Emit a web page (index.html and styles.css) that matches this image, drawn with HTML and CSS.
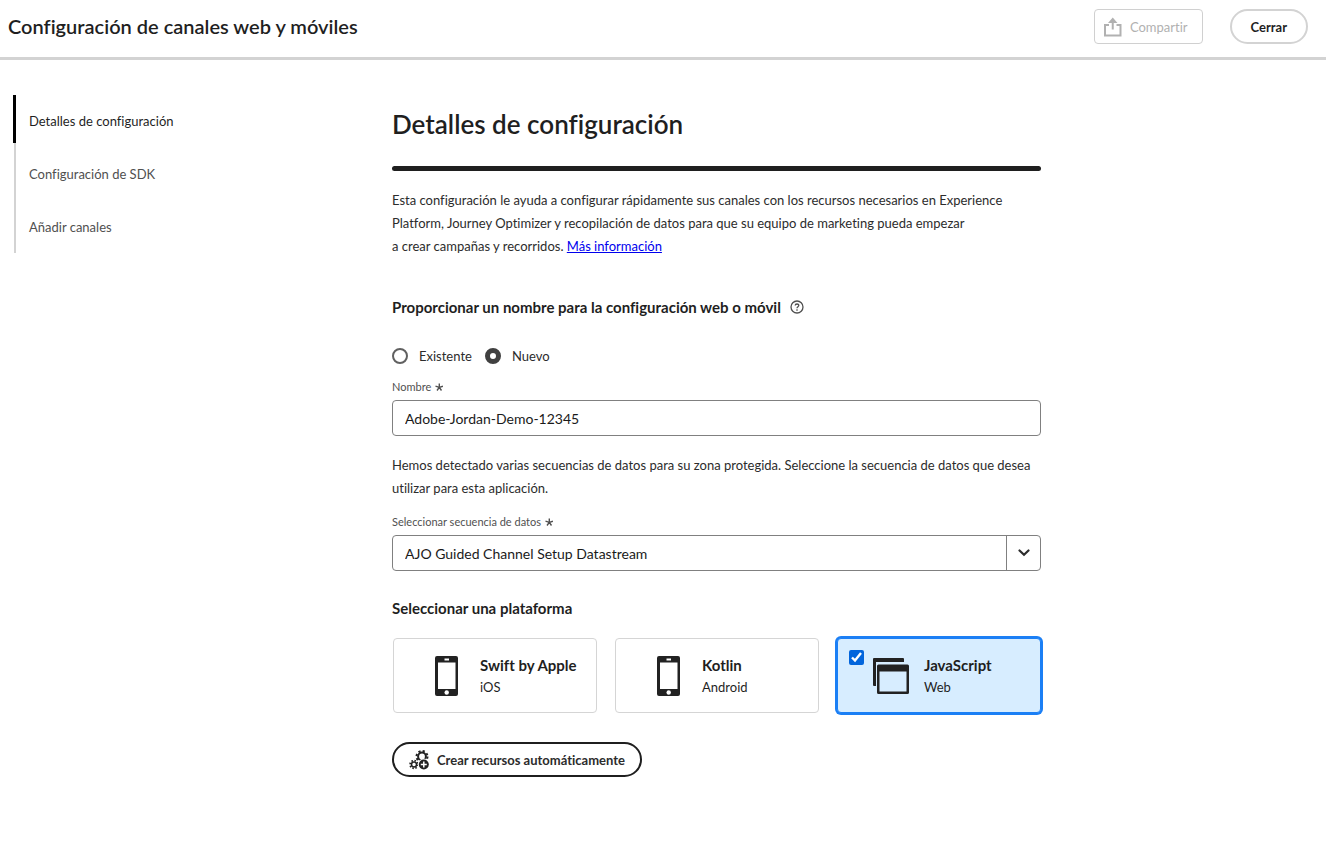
FILE: index.html
```html
<!DOCTYPE html>
<html lang="es">
<head>
<meta charset="utf-8">
<meta name="viewport" content="width=device-width, initial-scale=1">
<title>Configuración de canales web y móviles</title>
<link rel="stylesheet" href="styles.css">
</head>
<body>
<header class="topbar">
  <h1 class="topbar-title">Configuración de canales web y móviles</h1>
  <div class="topbar-actions">
    <button class="share" type="button" disabled>
      <svg width="20" height="20" viewBox="0 0 20 20" aria-hidden="true"><path d="M6 8H2v10.500h15.500V8h-4" fill="none" stroke="currentColor" stroke-width="2"/><path d="M9.750 0.500L14.500 6h-3.750v6.500h-2V6H5z" fill="currentColor"/></svg>
      <span>Compartir</span>
    </button>
    <button class="close" type="button">Cerrar</button>
  </div>
</header>
<div class="layout">
  <nav class="steps" aria-label="Pasos">
    <a class="step step-active" href="#detalles" aria-current="step">Detalles de configuración</a>
    <a class="step" href="#sdk">Configuración de SDK</a>
    <a class="step" href="#canales">Añadir canales</a>
  </nav>
  <main class="content" id="detalles">
    <h2 class="page-title">Detalles de configuración</h2>
    <div class="rule"></div>
    <p class="text">Esta configuración le ayuda a configurar rápidamente sus canales con los recursos necesarios en Experience<br>Platform, Journey Optimizer y recopilación de datos para que su equipo de marketing pueda empezar<br>a crear campañas y recorridos. <a class="link" href="#info">Más información</a></p>
    <h3 class="section-title name-title">Proporcionar un nombre para la configuración web o móvil
      <svg width="14" height="14" viewBox="0 0 14 14" fill="none" stroke="#505050" aria-hidden="true"><circle cx="7" cy="7" r="6" stroke-width="1.300"/><path d="M5.200 5.600C5.200 3.400 8.900 3.500 8.800 5.500C8.700 6.800 7 6.600 7 8.300" stroke-width="1.300"/><circle cx="7" cy="10" r=".5" fill="#505050" stroke-width=".6"/></svg>
    </h3>
    <div class="radios" role="radiogroup" aria-label="Tipo de configuración">
      <label class="radio"><input type="radio" name="kind"><span>Existente</span></label>
      <label class="radio"><input type="radio" name="kind" checked><span>Nuevo</span></label>
    </div>
    <label class="field-label" for="name">Nombre
      <svg width="8" height="8" viewBox="0 0 8 8" aria-hidden="true"><path d="M4.300 4.300V.4M4.300 4.300L.5 3.200M4.300 4.300L7.900 3.200M4.300 4.300L2 7.500M4.300 4.300L6.500 7.500" stroke="currentColor" stroke-width="1.400"/></svg>
    </label>
    <input class="control" id="name" type="text" value="Adobe-Jordan-Demo-12345">
    <p class="text stream-text">Hemos detectado varias secuencias de datos para su zona protegida. Seleccione la secuencia de datos que desea<br>utilizar para esta aplicación.</p>
    <label class="field-label" for="stream">Seleccionar secuencia de datos
      <svg width="8" height="8" viewBox="0 0 8 8" aria-hidden="true"><path d="M4.300 4.300V.4M4.300 4.300L.5 3.200M4.300 4.300L7.900 3.200M4.300 4.300L2 7.500M4.300 4.300L6.500 7.500" stroke="currentColor" stroke-width="1.400"/></svg>
    </label>
    <div class="picker">
      <select class="control" id="stream"><option>AJO Guided Channel Setup Datastream</option></select>
      <span class="picker-arrow"><svg width="12" height="8" viewBox="0 0 12 8" aria-hidden="true"><path d="M1.500 1.500L6 5.800L10.500 1.500" fill="none" stroke="#2c2c2c" stroke-width="2.200" stroke-linecap="round"/></svg></span>
    </div>
    <h3 class="section-title">Seleccionar una plataforma</h3>
    <div class="cards">
      <label class="card">
        <input class="card-check" type="checkbox">
        <svg class="card-icon" width="38" height="40" viewBox="0 0 38 40" aria-hidden="true"><path fill="#222" fill-rule="evenodd" d="M9 0h19a2 2 0 0 1 2 2v36a2 2 0 0 1-2 2H9a2 2 0 0 1-2-2V2a2 2 0 0 1 2-2zM10 6.500v26.500h17.500V6.500zM16.500 2.500v2h4.500v-2z"/><circle cx="18.700" cy="36.500" r="2.200" fill="#fff"/></svg>
        <span class="card-text"><strong>Swift by Apple</strong><span>iOS</span></span>
      </label>
      <label class="card">
        <input class="card-check" type="checkbox">
        <svg class="card-icon" width="38" height="40" viewBox="0 0 38 40" aria-hidden="true"><path fill="#222" fill-rule="evenodd" d="M9 0h19a2 2 0 0 1 2 2v36a2 2 0 0 1-2 2H9a2 2 0 0 1-2-2V2a2 2 0 0 1 2-2zM10 6.500v26.500h17.500V6.500zM16.500 2.500v2h4.500v-2z"/><circle cx="18.700" cy="36.500" r="2.200" fill="#fff"/></svg>
        <span class="card-text"><strong>Kotlin</strong><span>Android</span></span>
      </label>
      <label class="card card-selected">
        <input class="card-check" type="checkbox" checked>
        <svg class="card-icon" width="38" height="40" viewBox="0 0 38 40" aria-hidden="true"><path fill="#222" d="M2 2h29a1 1 0 0 1 1 1v3H4v24H2a1 1 0 0 1-1-1V3a1 1 0 0 1 1-1z"/><path fill="#222" fill-rule="evenodd" d="M6.500 8.500h29a1.500 1.500 0 0 1 1.500 1.500v26.500a1.500 1.500 0 0 1-1.500 1.500h-29A1.500 1.500 0 0 1 5 36.500V10a1.500 1.500 0 0 1 1.500-1.500zM7.500 15.500V35.500h27V15.500z"/></svg>
        <span class="card-text"><strong>JavaScript</strong><span>Web</span></span>
      </label>
    </div>
    <button class="create" type="button">
      <svg width="20" height="20" viewBox="0 0 20 20" fill="none" stroke="#222" aria-hidden="true"><circle cx="13" cy="6.500" r="3.900" stroke-width="2"/><circle cx="13" cy="6.500" r="5.500" stroke-width="2" stroke-dasharray="2.160 2.160"/><circle cx="5" cy="14.500" r="2.500" stroke-width="1.500"/><circle cx="5" cy="14.500" r="3.900" stroke-width="1.700" stroke-dasharray="1.530 1.530"/><circle cx="14.800" cy="14.500" r="6" fill="#fff" stroke="none"/><circle cx="14.800" cy="14.500" r="5" fill="#222" stroke="none"/><path d="M14.800 11.500v6M11.800 14.500h6" stroke="#fff" stroke-width="1.500"/></svg>
      <span>Crear recursos automáticamente</span>
    </button>
  </main>
</div>
</body>
</html>
```
FILE: styles.css
```css
* { box-sizing: border-box; }
body {
  margin: 0;
  background: #fff;
  color: #2c2c2c;
  font-family: Lato, "Noto Sans", sans-serif;
  font-size: 13px;
  font-variant-ligatures: none;
}
h1, h2, h3, p { margin: 0; }
button, input, select { font: inherit; color: inherit; }
svg { flex: none; }

.topbar {
  display: flex;
  justify-content: space-between;
  align-items: center;
  padding: 9px 18px 13px 8px;
  border-bottom: 3px solid #d3d3d3;
}
.topbar-title { padding-bottom: 2px; font-size: 20px; line-height: 28px; font-weight: 600; color: #1f1f1f; }
.topbar-actions { display: flex; gap: 27px; }
.share, .close { height: 35px; background: #fff; }
.share {
  display: flex;
  align-items: center;
  gap: 7px;
  padding: 0 14px 0 8px;
  border: 1px solid #d0d0d0;
  border-radius: 4px;
  color: #b1b1b1;
}
.close {
  padding: 0 19px;
  border: 2px solid #d3d3d3;
  border-radius: 18px;
  font-weight: 700;
  color: #1f1f1f;
}

.layout {
  display: grid;
  grid-template-columns: 365px minmax(0, 649px);
  column-gap: 14px;
  align-items: start;
  padding: 35px 13px;
}
.steps { position: relative; display: flex; flex-direction: column; gap: 1px; margin-left: 1px; border-left: 2px solid #d3d3d3; }
.step { line-height: 52px; padding-left: 13px; color: #505050; text-decoration: none; }
.step-active { color: #1f1f1f; }
.step-active::before { content: ""; position: absolute; top: 0; left: -3px; width: 3px; height: 48px; background: #000; }

.page-title {
  padding: 10px 0 23px;
  font-size: 26px;
  line-height: 38px;
  font-weight: 600;
  color: #1f1f1f;
}
.rule { height: 5px; margin-bottom: 18px; border-radius: 3px; background: #1f1f1f; }
.text { line-height: 23px; white-space: nowrap; }
.link { color: #00e; }
.section-title { font-size: 15px; line-height: 24px; font-weight: 700; color: #1f1f1f; }
.name-title { display: flex; align-items: center; gap: 9px; margin: 37px 0 26px; }
.radios { display: flex; gap: 13px; }
.radio { display: flex; align-items: center; gap: 11px; line-height: 22px; }
.radio input {
  appearance: none;
  width: 16px;
  height: 16px;
  margin: 0;
  border: 2px solid #606060;
  border-radius: 50%;
}
.radio input:checked { border: 5px solid #404040; }
.field-label { display: flex; align-items: center; gap: 4px; margin-top: 12px; line-height: 16px; padding-bottom: 5px; font-size: 11px; color: #505050; }
.control {
  display: block;
  width: 100%;
  height: 36px;
  padding: 0 12px;
  border: 1px solid #808080;
  border-radius: 4px;
  background: #fff;
  font-size: 14px;
  color: #1a1a1a;
}
.stream-text { margin: 18px 0 14px; }
.picker { display: grid; margin-bottom: 25px; }
.picker .control { grid-area: 1 / 1; appearance: none; }
.picker-arrow {
  grid-area: 1 / 1;
  justify-self: end;
  display: flex;
  align-items: center;
  justify-content: center;
  width: 35px;
  border-left: 1px solid #808080;
  pointer-events: none;
}
.cards { display: grid; grid-template-columns: repeat(3, minmax(0, 1fr)); gap: 18px; margin: 18px 0 29px 1px; }
.card {
  position: relative;
  display: flex;
  align-items: center;
  gap: 14px;
  height: 75px;
  padding-left: 34px;
  border: 1px solid #d5d5d5;
  border-radius: 4px;
}
.card-selected { background: #d7edff; border-color: #1b7ff5; box-shadow: 0 0 0 2px #1b7ff5; }
.card-check { position: absolute; top: 11px; left: 11px; width: 15px; height: 15px; margin: 0; accent-color: #0265dc; opacity: 0; }
.card-check:checked { opacity: 1; }
.card-text { display: flex; flex-direction: column; line-height: 22px; color: #1f1f1f; }
.card-text strong { font-size: 15px; }
.create {
  display: flex;
  align-items: center;
  gap: 8px;
  height: 35px;
  padding: 0 15px;
  border: 2px solid #1f1f1f;
  border-radius: 18px;
  background: #fff;
  font-weight: 700;
}
```
